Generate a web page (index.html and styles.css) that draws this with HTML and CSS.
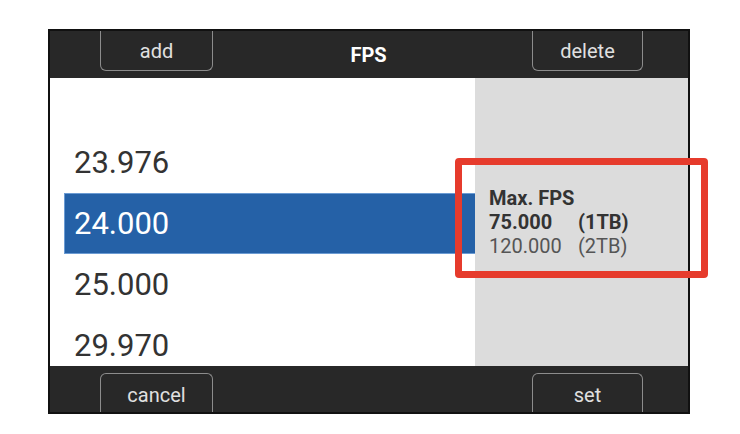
FILE: index.html
```html
<!DOCTYPE html>
<html>
<head>
<meta charset="utf-8">
<link rel="stylesheet" href="styles.css">
</head>
<body>
<div class="frame">
  <div class="header">
    <div class="btn btn-top">add</div>
    <div class="title">FPS</div>
    <div class="btn btn-top btn-right">delete</div>
  </div>
  <div class="main">
    <div class="list">
      <div class="item">23.976</div>
      <div class="item selected">24.000</div>
      <div class="item">25.000</div>
      <div class="item">29.970</div>
    </div>
    <div class="panel">
      <div class="info">
        <div class="info-title">Max. FPS</div>
        <div class="row bold"><span>75.000</span><span>(1TB)</span></div>
        <div class="row light"><span>120.000</span><span>(2TB)</span></div>
      </div>
    </div>
  </div>
  <div class="footer">
    <div class="btn btn-bottom">cancel</div>
    <div class="btn btn-bottom btn-right">set</div>
  </div>
</div>
<div class="highlight"></div>
</body>
</html>
```
FILE: styles.css
```css
html, body {
  margin: 0;
  padding: 0;
  background: #ffffff;
  font-family: Roboto, "Liberation Sans", sans-serif;
}
body {
  width: 740px;
  height: 434px;
  position: relative;
  overflow: hidden;
}
.frame {
  margin: 29px 0 0 48px;
  width: 638px;
  height: 381px;
  border: 2px solid #111;
  display: flex;
  flex-direction: column;
  overflow: hidden;
}
.header, .footer {
  background: #282828;
  display: flex;
  align-items: flex-start;
  padding: 0 45px 0 50px;
  box-sizing: border-box;
}
.header {
  height: 47px;
}
.footer {
  height: 46px;
  align-items: flex-end;
  justify-content: space-between;
}
.btn {
  width: 111px;
  box-sizing: border-box;
  border: 1px solid #8c8c8c;
  color: #e0e0e0;
  font-size: 20px;
  display: flex;
  align-items: center;
  justify-content: center;
}
.btn-top {
  height: 41px;
  border-top: none;
  border-radius: 0 0 6px 6px;
  margin-top: -1px;
  padding-top: 2px;
}
.btn-bottom {
  height: 39px;
  border-bottom: none;
  border-radius: 6px 6px 0 0;
  padding-top: 3px;
}
.btn-right {
  width: 111px;
}
.header .btn:first-child {
  width: 113px;
}
.footer .btn:first-child {
  width: 113px;
}
.title {
  flex: 1;
  text-align: center;
  color: #ffffff;
  font-weight: bold;
  font-size: 20px;
  line-height: 47px;
  padding-right: 8px;
  padding-top: 1px;
}
.main {
  flex: 1;
  display: flex;
  min-height: 0;
}
.list {
  width: 425px;
  background: #ffffff;
  padding-top: 54px;
  box-sizing: border-box;
  overflow: hidden;
}
.item {
  height: 61px;
  line-height: 61px;
  margin-left: 14px;
  padding-left: 10px;
  font-size: 31px;
  color: #333333;
  box-sizing: border-box;
}
.item.selected {
  background: #2561a7;
  color: #ffffff;
  border: 1px solid #6b9bd3;
  border-right: none;
  line-height: 59px;
  padding-left: 9px;
}
.panel {
  flex: 1;
  background: #dcdcdc;
  display: flex;
  align-items: center;
  padding-left: 14px;
}
.info {
  font-size: 20px;
  line-height: 24px;
  color: #333333;
}
.info-title {
  font-weight: bold;
}
.row {
  display: grid;
  grid-template-columns: 89px auto;
}
.row.bold {
  font-weight: bold;
}
.row.light {
  color: #555555;
}
.highlight {
  position: absolute;
  left: 455px;
  top: 158px;
  width: 253px;
  height: 120px;
  box-sizing: border-box;
  border: 7px solid #e63b2c;
  border-radius: 4px;
}
```
